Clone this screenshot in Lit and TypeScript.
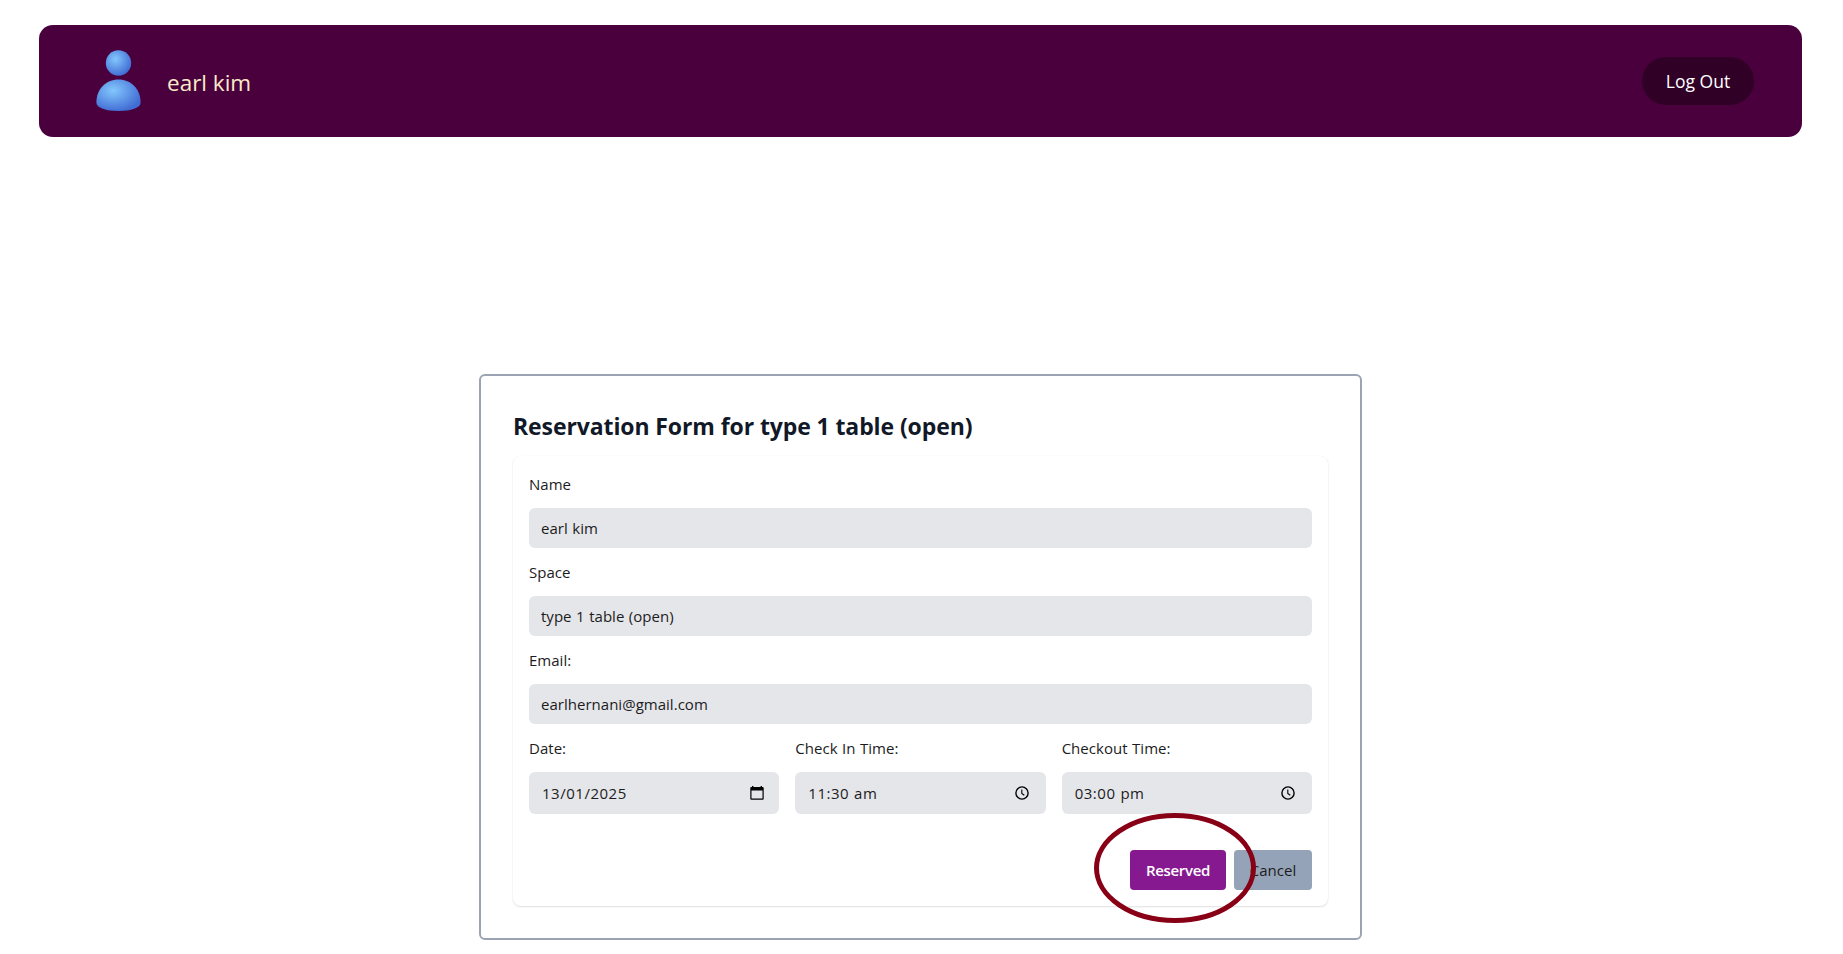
import { LitElement, html, css } from "lit";
import { customElement } from "lit/decorators.js";

const calendarIcon = html`<svg class="icon" viewBox="0 0 14 14" width="14" height="14">
  <path d="M2 0h1.400v1H10.600V0H12v1h.6q1.100 0 1.100 1.100v10.600q0 1.100-1.100 1.100H1.400q-1.100 0-1.100-1.100V2.100Q.3 1 1.400 1H2zM1.500 4.500v8.100h11V4.500z" fill="#000" fill-rule="evenodd"/>
</svg>`;

const clockIcon = html`<svg class="icon" viewBox="0 0 14 14" width="14" height="14">
  <circle cx="7" cy="7" r="6.100" fill="none" stroke="#000" stroke-width="1.400"/>
  <path d="M6.800 3.500v3.900l2.500 1.900" fill="none" stroke="#000" stroke-width="1.100"/>
</svg>`;

@customElement("app-root")
export class AppRoot extends LitElement {
  static styles = css`
    :host {
      display: block;
      box-sizing: border-box;
      height: 954px;
      padding: 25px 41px 0 39px;
      overflow: hidden;
      background: #fff;
      color: #1c1c1c;
      font-family: "Open Sans", "Noto Sans", sans-serif;
      font-size: 15px;
      line-height: 24px;
    }
    * { box-sizing: border-box; }
    span { white-space: nowrap; }
    .bar {
      display: flex;
      align-items: center;
      height: 112px;
      padding: 0 48px 0 57px;
      border-radius: 14px;
      background: #4a003d;
    }
    .avatar { display: block; width: 45px; height: 62px; }
    .user { margin: 3px 0 0 26px; font-size: 22.500px; line-height: 32px; color: #f9ebc8; }
    .logout {
      display: flex;
      align-items: center;
      justify-content: center;
      width: 112px;
      height: 48px;
      margin-left: auto;
      border-radius: 24px;
      background: #300027;
      color: #fff;
      font-size: 17.500px;
    }
    .card {
      width: 883px;
      height: 566px;
      margin: 237px 0 0 440px;
      padding: 32px;
      border: 2px solid #9ca3b3;
      border-radius: 6px;
    }
    h1 { margin: 2px 0 14px 0; font-size: 23px; line-height: 32px; font-weight: 700; color: #111827; white-space: nowrap; letter-spacing: -0.100px; }
    .panel {
      position: relative;
      height: 450px;
      padding: 16px;
      border-radius: 8px;
      box-shadow: 0 1px 2px rgba(0, 0, 0, 0.12), 0 0 1px rgba(0, 0, 0, 0.08);
    }
    .field { display: flex; flex-direction: column; gap: 12px; margin-bottom: 12px; }
    .value {
      display: flex;
      align-items: center;
      height: 40px;
      padding: 0 12px;
      border-radius: 6px;
      background: #e5e6ea;
    }
    .row { display: grid; grid-template-columns: repeat(3, 1fr); gap: 16px; }
    .row .field { margin: 0; }
    .row .value { height: 42px; padding: 0 15px 0 13px; justify-content: space-between; }
    .icon { display: block; margin-bottom: 1px; }
    .row .field:not(:first-child) .icon { margin-right: 2px; }
    .actions { display: flex; justify-content: flex-end; gap: 8px; margin-top: 36px; }
    .btn { display: flex; align-items: center; justify-content: center; height: 40px; border-radius: 4px; }
    .reserve { width: 96px; background: #86198f; color: #fff; font-weight: 600; letter-spacing: -0.350px; }
    .cancel { width: 78px; background: #94a3b8; }
    .mark { position: absolute; left: 581px; top: 357px; pointer-events: none; }
    .text { letter-spacing: 0.020px; word-spacing: 0.6px; }
    .digits { letter-spacing: 0.520px; word-spacing: 0.5px; }
  `;

  private field(label: string, value: string, icon: unknown = "") {
    return html`<div class="field">
      <span class="text">${label}</span>
      <div class="value"><span class=${icon ? "digits" : "text"}>${value}</span>${icon}</div>
    </div>`;
  }

  render() {
    return html`
      <header class="bar">
        <svg class="avatar" viewBox="0 0 45 62">
          <defs>
            <radialGradient id="g" cx="0.38" cy="0.35" r="0.68">
              <stop offset="0" stop-color="#83c7fd"/>
              <stop offset="1" stop-color="#406cd4"/>
            </radialGradient>
          </defs>
          <circle cx="22.500" cy="13" r="12.700" fill="url(#g)"/>
          <path d="M22.500 29.500C35 29.500 44.600 39 44.600 52.500C44.600 58 35 61 22.500 61S.4 58 .4 52.500C.4 39 10 29.500 22.500 29.500Z" fill="url(#g)"/>
        </svg>
        <span class="user">earl kim</span>
        <div class="logout" role="button"><span>Log Out</span></div>
      </header>
      <main class="card">
        <h1>Reservation Form for type 1 table (open)</h1>
        <section class="panel">
          ${this.field("Name", "earl kim")}
          ${this.field("Space", "type 1 table (open)")}
          ${this.field("Email:", "earlhernani@gmail.com")}
          <div class="row">
            ${this.field("Date:", "13/01/2025", calendarIcon)}
            ${this.field("Check In Time:", "11:30 am", clockIcon)}
            ${this.field("Checkout Time:", "03:00 pm", clockIcon)}
          </div>
          <div class="actions">
            <div class="btn reserve" role="button"><span>Reserved</span></div>
            <div class="btn cancel" role="button"><span>Cancel</span></div>
          </div>
          <svg class="mark" width="162" height="110" viewBox="0 0 162 110">
            <ellipse cx="81" cy="55" rx="78.500" ry="52.500" fill="none" stroke="#880015" stroke-width="5"/>
          </svg>
        </section>
      </main>
    `;
  }
}
